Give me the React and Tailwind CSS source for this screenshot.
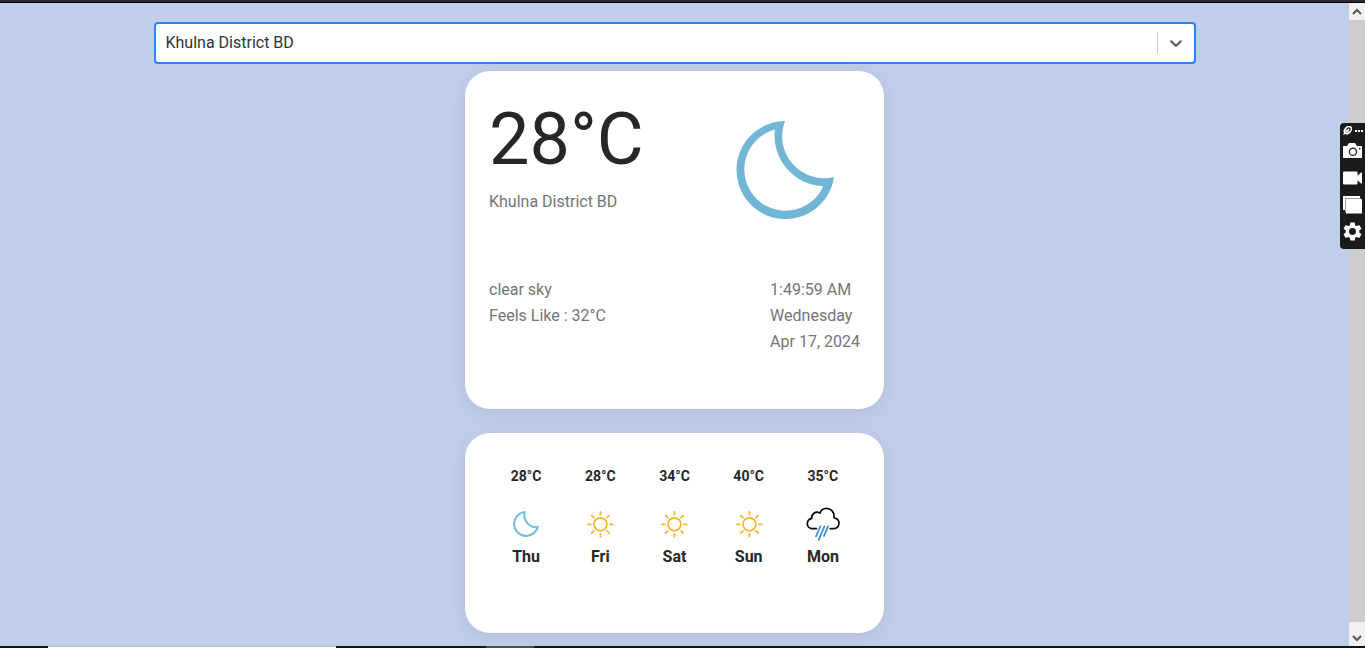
import React, { useState } from "react";

const PLACES = ["Khulna District BD", "Dhaka District BD", "Sylhet District BD"];

const FORECAST = [
  { day: "Thu", temp: "28°C", kind: "moon" },
  { day: "Fri", temp: "28°C", kind: "sun" },
  { day: "Sat", temp: "34°C", kind: "sun" },
  { day: "Sun", temp: "40°C", kind: "sun" },
  { day: "Mon", temp: "35°C", kind: "rain" },
];

function Moon({ className }) {
  return (
    <svg viewBox="16 21 98 98" className={className} aria-hidden="true">
      <path
        fill="currentColor"
        fillRule="evenodd"
        d="M65 21A49 49 0 1 0 114 77A42 42 0 0 1 65 21ZM54.8 29.5A41.3 41.3 0 1 0 103.3 86.3A51 51 0 0 1 54.8 29.5Z"
      />
    </svg>
  );
}

function Sun() {
  return (
    <svg viewBox="-14 -14 28 28" className="size-7 text-[#fbb22c]" fill="none" stroke="currentColor" strokeWidth="1.7" strokeLinecap="round" aria-hidden="true">
      <circle cx=".4" cy=".3" r="6.500" />
      <path d="M.4-12.100V-9.300M.4 12.700V9.900M-12 .3H-9.200M12.800 .3H10M-8.400-8.500L-6.200-6.300M9.200-8.500L7-6.300M-8.400 9.100L-6.200 6.900M9.200 9.100L7 6.900" />
    </svg>
  );
}

function Rain() {
  return (
    <svg viewBox="349 156 102 102" className="size-[34px]" fill="none" strokeWidth="5.200" strokeLinecap="round" aria-hidden="true">
      <path
        stroke="#0b0b0b"
        d="M380 221H368C359 221 353 214 353 206C353 198 358 192 366 190C365 178 377 167 391 174C394 165 402 160 410 160C424 160 435 171 433 188C442 190 448 197 448 205C448 214 441 221 433 221H422"
      />
      <path stroke="#3a8fd4" d="M392 214L379 244M404 214L387 255M415 214L403 243" />
    </svg>
  );
}

function WeatherIcon({ kind }) {
  if (kind === "moon") return <Moon className="size-[26px] text-[#74bfe0]" />;
  if (kind === "sun") return <Sun />;
  return <Rain />;
}

function LocationSelect({ value, onChange }) {
  return (
    <div className="grid w-full max-w-[1042px] items-center">
      <select
        aria-label="Location"
        value={value}
        onChange={(e) => onChange(e.target.value)}
        className="col-start-1 row-start-1 h-[42px] w-full appearance-none rounded border-2 border-[#2684ff] bg-white pl-[10px] pr-12 text-base text-[#333333] outline-none"
      >
        {PLACES.map((p) => (
          <option key={p}>{p}</option>
        ))}
      </select>
      <div className="pointer-events-none col-start-1 row-start-1 mr-[10px] flex items-center gap-2 justify-self-end">
        <span className="h-[22px] w-px bg-[#cccccc]" />
        <svg viewBox="0 0 20 20" className="size-5 text-[#666666]" fill="currentColor" aria-hidden="true">
          <path d="M4.516 7.548c0.436-0.446 1.043-0.481 1.576 0l3.908 3.747 3.908-3.747c0.533-0.481 1.141-0.446 1.574 0 0.436 0.445 0.408 1.197 0 1.615-0.406 0.418-4.695 4.502-4.695 4.502-0.217 0.223-0.502 0.335-0.787 0.335s-0.57-0.112-0.789-0.335c0 0-4.287-4.084-4.695-4.502s-0.436-1.17 0-1.615z" />
        </svg>
      </div>
    </div>
  );
}

function CurrentWeather({ place }) {
  return (
    <section className="w-full max-w-[419px] rounded-[25px] bg-white px-6 pb-[54px] pt-[33px] leading-[26px] text-[#757575] shadow-[0_4px_20px_rgba(0,0,0,0.08)]">
      <div className="flex justify-between">
        <div>
          <h1 className="text-7xl leading-none text-[#272727]">28°C</h1>
          <p className="mt-[13px]">{place}</p>
        </div>
        <Moon className="mr-[26px] mt-[17px] size-[98px] text-[#72b6d5]" />
      </div>
      <div className="mt-[58px] flex justify-between">
        <div>
          <p>clear sky</p>
          <p>Feels Like : 32°C</p>
        </div>
        <div>
          <p>1:49:59 AM</p>
          <p>Wednesday</p>
          <p>Apr 17, 2024</p>
        </div>
      </div>
    </section>
  );
}

function Forecast() {
  return (
    <section className="mt-6 w-full max-w-[419px] rounded-[25px] bg-white px-6 pb-[63px] pt-8 font-bold text-[#272727] shadow-[0_4px_20px_rgba(0,0,0,0.08)]">
      <ul className="grid grid-cols-5">
        {FORECAST.map((f) => (
          <li key={f.day} className="flex flex-col items-center">
            <p className="text-sm leading-[22px]">{f.temp}</p>
            <div className="mb-[3px] mt-5 flex h-[34px] items-center justify-center">
              <WeatherIcon kind={f.kind} />
            </div>
            <p className="leading-[26px]">{f.day}</p>
          </li>
        ))}
      </ul>
    </section>
  );
}

function ScrollArrow({ d }) {
  return (
    <svg viewBox="0 0 10 8" className="h-2 w-[10px]" fill="none" stroke="#555555" strokeWidth="2" aria-hidden="true">
      <path d={d} />
    </svg>
  );
}

function ScrollTrack() {
  return (
    <div className="flex w-4 shrink-0 flex-col bg-[#cdcdcd]">
      <button aria-label="Scroll up" className="flex h-[17px] items-center justify-center bg-[#f0f0f0]">
        <ScrollArrow d="M1 6L5 2L9 6" />
      </button>
      <div className="flex-1" />
      <button aria-label="Scroll down" className="flex h-6 items-end justify-center bg-[#f0f0f0] pb-1">
        <ScrollArrow d="M1 2L5 6L9 2" />
      </button>
    </div>
  );
}

function CaptureTools() {
  return (
    <div className="absolute right-0 top-[123px] flex w-[25px] flex-col items-center gap-2 rounded-l bg-[#1b1b1b] pb-2 pt-[3px] text-white">
      <div className="flex h-[9px] items-center gap-[3px]">
        <svg viewBox="0 0 9 9" className="size-[9px]" fill="none" stroke="currentColor" aria-hidden="true">
          <ellipse cx="5" cy="4" rx="3.900" ry="2.800" transform="rotate(-48 5 4)" strokeWidth="1.500" />
          <path d="M.5 5.500L2.500 4M.5 8.500L6.200 2.800M3.500 8.300L5.500 6.500M3.200 3.800L5.800 5.200" strokeWidth="1.300" />
        </svg>
        <svg viewBox="0 0 8 2" className="h-[2px] w-2" fill="currentColor" aria-hidden="true">
          <path d="M0 0h2v2H0zM3 0h2v2H3zM6 0h2v2H6z" />
        </svg>
      </div>
      <button aria-label="Screenshot" className="flex h-[15px] w-[19px]">
        <svg viewBox="0 0 19 15" className="h-[15px] w-[19px]">
          <path fill="currentColor" d="M0 3h4l2-3h6l2 3h5v12H0z" />
          <circle cx="10" cy="8.800" r="3.600" fill="none" stroke="#333333" strokeWidth="1.400" />
          <path d="M16 5h1.400v1.400H16z" fill="#1b1b1b" />
        </svg>
      </button>
      <button aria-label="Record video" className="mt-[5px] flex h-[14px] w-[19px]">
        <svg viewBox="0 0 19 14" className="h-[14px] w-[19px]" fill="currentColor">
          <path d="M1 .5h12.500q1 0 1 1v3.200L18 1.500h1v11h-1l-3.500-3.200v3.200q0 1-1 1H1q-1 0-1-1v-11q0-1 1-1z" />
        </svg>
      </button>
      <button aria-label="Gallery" className="mt-[3px] flex h-[18px] w-[19px]">
        <svg viewBox="0 0 19 18" className="h-[18px] w-[19px]">
          <path d="M0 0h17v2H2V14H0z" fill="currentColor" />
          <path d="M2 2H18V3H3v13H2z" fill="#a0a0a0" />
          <path d="M3 3h16v14.500H3z" fill="currentColor" />
        </svg>
      </button>
      <button aria-label="Settings" className="flex size-[19px]">
        <svg viewBox="2.200 2 19.600 20" className="size-[19px]" fill="currentColor">
          <path d="M19.140 12.940c.04-.3.06-.61.06-.94 0-.32-.02-.64-.07-.94l2.030-1.580a.49.49 0 0 0 .12-.61l-1.920-3.320a.488.488 0 0 0-.59-.22l-2.390.96c-.5-.38-1.030-.7-1.620-.94l-.36-2.540a.484.484 0 0 0-.48-.41h-3.840c-.24 0-.43.17-.47.41l-.36 2.540c-.59.24-1.130.57-1.620.94l-2.390-.96c-.22-.08-.47 0-.59.22L2.740 8.870c-.12.21-.08.47.12.61l2.030 1.580c-.05.3-.09.63-.09.94s.02.64.07.94l-2.030 1.580a.49.49 0 0 0-.12.61l1.920 3.320c.12.22.37.29.59.22l2.390-.96c.5.38 1.030.7 1.620.94l.36 2.540c.05.24.24.41.48.41h3.840c.24 0 .44-.17.47-.41l.36-2.540c.59-.24 1.130-.56 1.620-.94l2.390.96c.22.08.47 0 .59-.22l1.920-3.320c.12-.22.07-.47-.12-.61l-2.010-1.580zM12 15.600A3.600 3.600 0 1 1 12 8.400a3.600 3.600 0 0 1 0 7.200z" />
        </svg>
      </button>
    </div>
  );
}

export default function App() {
  const [place, setPlace] = useState(PLACES[0]);
  return (
    <div className="relative flex min-h-screen flex-col bg-[#c1ceea] font-['Roboto',sans-serif] text-base">
      <div className="h-[3px] border-b border-black bg-[#2b2a33]" />
      <div className="flex flex-1">
        <main className="flex flex-1 flex-col items-center pt-[19px]">
          <LocationSelect value={place} onChange={setPlace} />
          <div className="mt-[7px] flex w-full flex-col items-center">
            <CurrentWeather place={place} />
            <Forecast />
          </div>
        </main>
        <ScrollTrack />
      </div>
      <div className="flex h-[2px] bg-[#171415]">
        <div className="ml-12 w-72 border-t border-[#bbbbbb] bg-white" />
        <div className="ml-[150px] w-12 bg-[#504c4e]" />
      </div>
      <CaptureTools />
    </div>
  );
}
